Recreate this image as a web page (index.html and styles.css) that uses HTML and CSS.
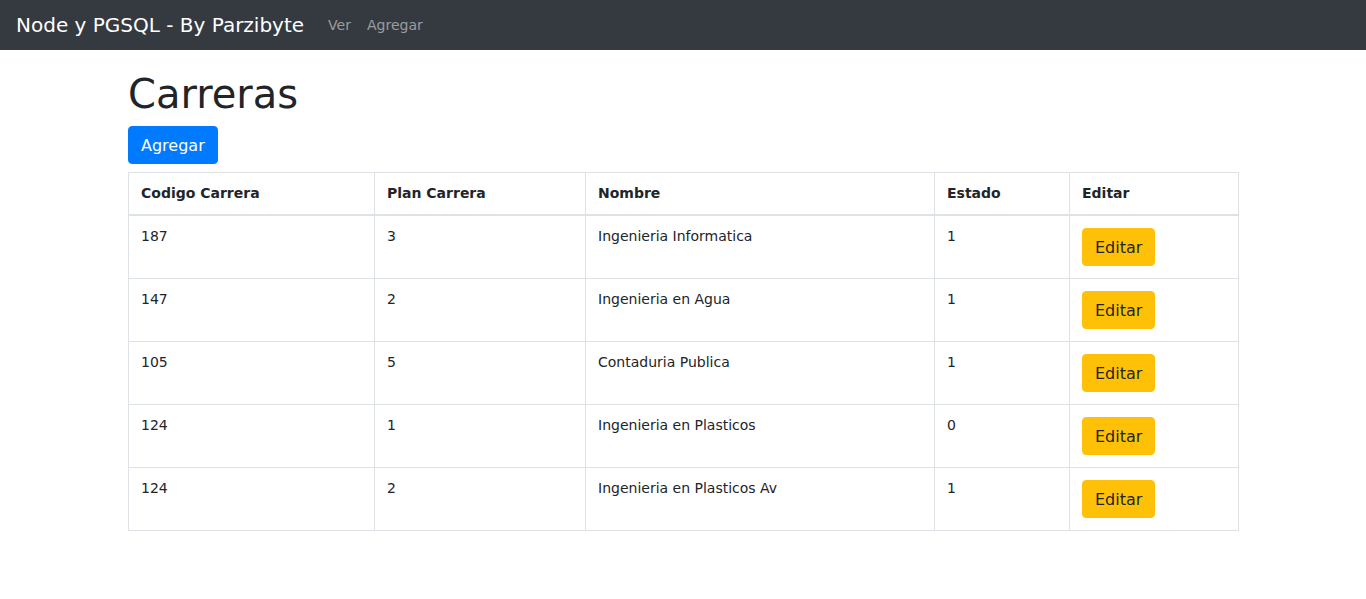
FILE: index.html
```html
<!DOCTYPE html>
<html lang="es">
<head>
<meta charset="utf-8">
<title>Carreras</title>
<link rel="stylesheet" href="styles.css">
</head>
<body>
<nav class="navbar">
  <a class="brand" href="#">Node y PGSQL - By Parzibyte</a>
  <ul class="nav">
    <li><a class="nav-link" href="#">Ver</a></li>
    <li><a class="nav-link" href="#">Agregar</a></li>
  </ul>
</nav>
<main class="container">
  <h1 class="title">Carreras</h1>
  <a class="btn btn-primary" href="#">Agregar</a>
  <table class="table">
    <colgroup>
      <col class="c1"><col class="c2"><col class="c3"><col class="c4"><col class="c5">
    </colgroup>
    <thead>
      <tr><th>Codigo Carrera</th><th>Plan Carrera</th><th>Nombre</th><th>Estado</th><th>Editar</th></tr>
    </thead>
    <tbody>
      <tr><td>187</td><td>3</td><td>Ingenieria Informatica</td><td>1</td><td><a class="btn btn-warning" href="#">Editar</a></td></tr>
      <tr><td>147</td><td>2</td><td>Ingenieria en Agua</td><td>1</td><td><a class="btn btn-warning" href="#">Editar</a></td></tr>
      <tr><td>105</td><td>5</td><td>Contaduria Publica</td><td>1</td><td><a class="btn btn-warning" href="#">Editar</a></td></tr>
      <tr><td>124</td><td>1</td><td>Ingenieria en Plasticos</td><td>0</td><td><a class="btn btn-warning" href="#">Editar</a></td></tr>
      <tr><td>124</td><td>2</td><td>Ingenieria en Plasticos Av</td><td>1</td><td><a class="btn btn-warning" href="#">Editar</a></td></tr>
    </tbody>
  </table>
</main>
</body>
</html>
```
FILE: styles.css
```css
* { box-sizing: border-box; }
html, body { margin: 0; padding: 0; }
body {
  font-family: "DejaVu Sans", sans-serif;
  font-size: 16px;
  line-height: 1.5;
  color: #212529;
  background: #fff;
}
a { text-decoration: none; }

.navbar {
  height: 50px;
  background: #343a40;
  display: flex;
  align-items: center;
  padding: 0 16px;
}
.brand {
  color: #fff;
  font-size: 20px;
  line-height: 30px;
  margin-right: 16px;
}
.nav {
  list-style: none;
  margin: 0;
  padding: 0;
  display: flex;
}
.nav-link {
  display: block;
  padding: 8px;
  font-size: 14px;
  line-height: 21px;
  color: rgba(255, 255, 255, 0.5);
}

.container {
  width: 1110px;
  margin: 0 auto;
  padding-top: 20px;
}
.title {
  font-size: 40px;
  font-weight: 500;
  line-height: 48px;
  margin: 0 0 8px;
}
.btn {
  display: inline-block;
  font-size: 16px;
  line-height: 24px;
  padding: 7px 12px 5px;
  border: 1px solid transparent;
  border-radius: 4px;
}
.btn-primary { background: #007bff; border-color: #007bff; color: #fff; }
.btn-warning { background: #ffc107; border-color: #ffc107; color: #212529; }

.table {
  width: 100%;
  margin-top: 8px;
  border-collapse: collapse;
  table-layout: fixed;
  font-size: 14px;
  line-height: 16px;
}
.c1 { width: 246px; }
.c2 { width: 211px; }
.c3 { width: 349px; }
.c4 { width: 135px; }
.c5 { width: 169px; }
.table th, .table td {
  border: 1px solid #dee2e6;
  padding: 12px;
  text-align: left;
  vertical-align: top;
}
.table th { font-weight: 700; line-height: 17px; }
.table thead th { border-bottom: 2px solid #dee2e6; }
```
